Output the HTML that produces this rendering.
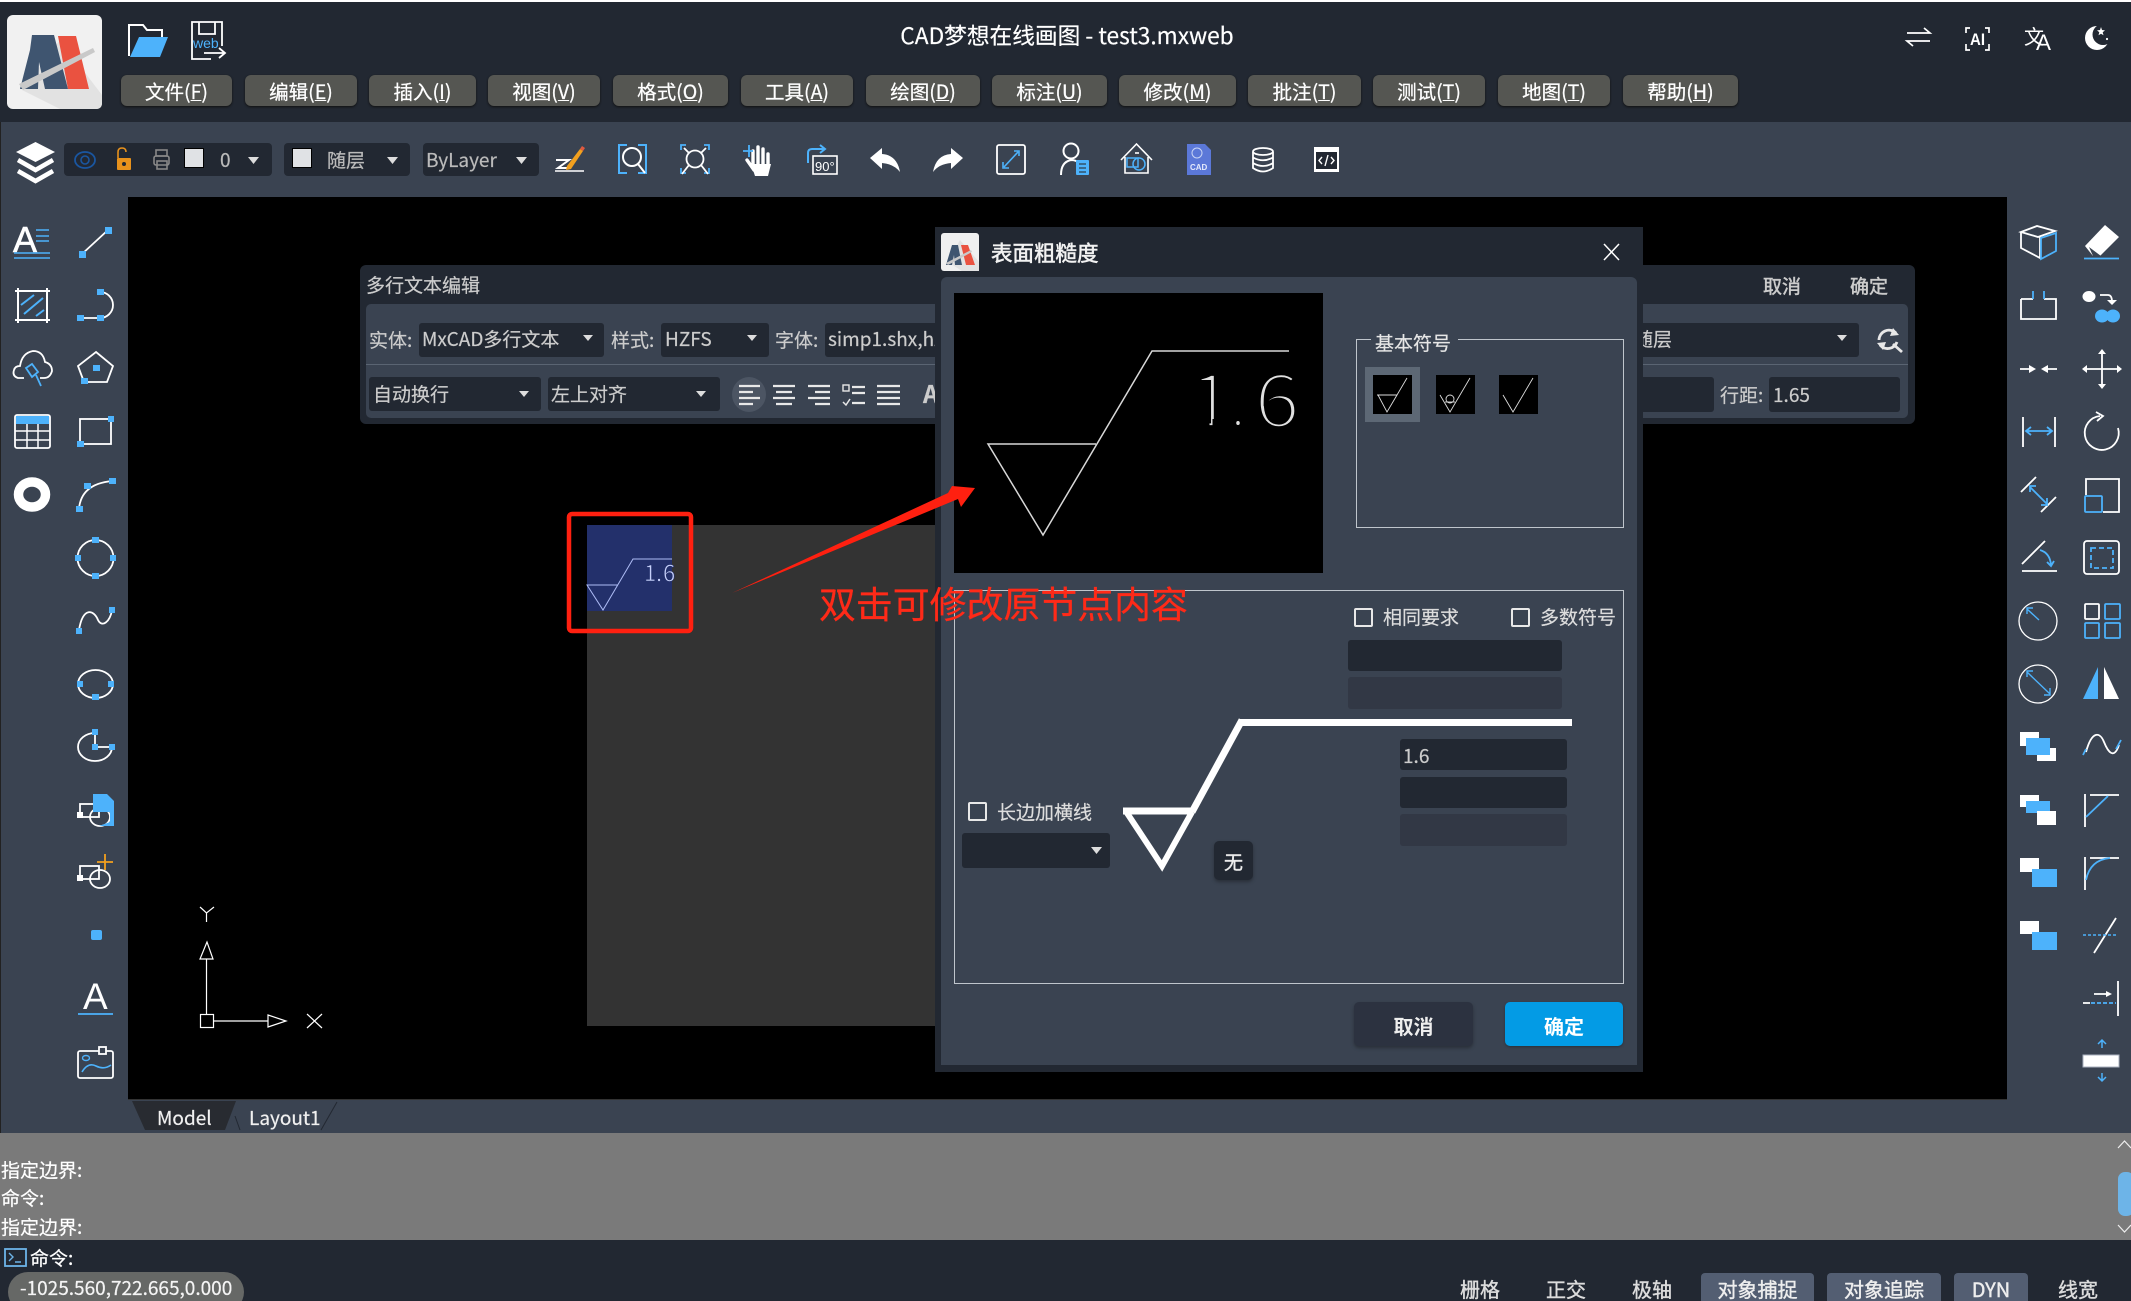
<!DOCTYPE html>
<html lang="zh"><head><meta charset="utf-8"><title>CAD梦想在线画图</title>
<style>
html,body{margin:0;padding:0;background:#000}
#p{position:relative;width:2131px;height:1301px;overflow:hidden;background:#3a4351;font-family:"Noto Sans CJK SC","Liberation Sans",sans-serif;color:#fff}
#p div{position:absolute;box-sizing:border-box}
.t{white-space:nowrap;font-size:19px;line-height:30px;height:30px;-webkit-text-stroke:.2px}
.l{color:#ccc}
.m{top:75px;height:31px;background:#555652;border-radius:6px;box-shadow:0 1px 2px #111;text-align:center;font-size:19.5px;line-height:31px;-webkit-text-stroke:.25px}
.d{background:#222832;border-radius:3px}
.e{background:#323845;border-radius:3px}
.s{background:#535e72;border-radius:4px 4px 0 0;top:1273px;height:28px;text-align:center;font-size:20px;line-height:32px;color:#eee;-webkit-text-stroke:.4px}
.sp{top:1274px;font-size:20px;line-height:30px;color:#ddd;white-space:nowrap;-webkit-text-stroke:.4px}
.c{border:2px solid #e8e8e8;border-radius:2px;width:19px;height:19px}
svg{position:absolute;left:0;top:0}
</style></head><body><div id="p">
<div style="left:0;top:0;width:2131px;height:2px;background:#fff"></div>
<div style="left:0;top:2px;width:2131px;height:120px;background:#222832"></div>
<div style="left:0;top:122px;width:1px;height:1118px;background:#222"></div>
<div style="left:128px;top:197px;width:1879px;height:903px;background:#000"></div>
<div style="left:587px;top:525px;width:360px;height:501px;background:#333"></div>
<div style="left:587px;top:525px;width:85px;height:86px;background:#23306b"></div>

<div class="t" style="left:0;top:20px;width:2134px;text-align:center;font-size:22.7px;line-height:30px">CAD梦想在线画图 - test3.mxweb</div>

<div class="m" style="left:121px;width:111px">文件(<u>F</u>)</div>
<div class="m" style="left:245px;width:112px">编辑(<u>E</u>)</div>
<div class="m" style="left:369px;width:107px">插入(<u>I</u>)</div>
<div class="m" style="left:488px;width:112px">视图(<u>V</u>)</div>
<div class="m" style="left:613px;width:115px">格式(<u>O</u>)</div>
<div class="m" style="left:741px;width:112px">工具(<u>A</u>)</div>
<div class="m" style="left:866px;width:114px">绘图(<u>D</u>)</div>
<div class="m" style="left:992px;width:115px">标注(<u>U</u>)</div>
<div class="m" style="left:1119px;width:117px">修改(<u>M</u>)</div>
<div class="m" style="left:1248px;width:113px">批注(<u>T</u>)</div>
<div class="m" style="left:1373px;width:112px">测试(<u>T</u>)</div>
<div class="m" style="left:1498px;width:112px">地图(<u>T</u>)</div>
<div class="m" style="left:1623px;width:115px">帮助(<u>H</u>)</div>

<div class="d" style="left:64px;top:143px;width:208px;height:33px;border-radius:4px"></div>
<div class="d" style="left:284px;top:143px;width:126px;height:33px;border-radius:4px"></div>
<div class="d" style="left:423px;top:143px;width:116px;height:33px;border-radius:4px"></div>
<div style="left:184px;top:148px;width:20px;height:20px;background:#e0e2e5;border:1px solid #000"></div>
<div style="left:292px;top:148px;width:20px;height:20px;background:#e0e2e5;border:1px solid #000"></div>
<div class="t" style="left:220px;top:145px;color:#bbb">0</div>
<div class="t" style="left:327px;top:145px;color:#bbb">随层</div>
<div class="t" style="left:426px;top:145px;color:#bbb">ByLayer</div>

<!-- text editor panel -->
<div style="left:360px;top:265px;width:1555px;height:159px;background:#222832;border-radius:6px"></div>
<div style="left:366px;top:304px;width:1542px;height:114px;background:#3a4351;border-radius:5px"></div>
<div style="left:366px;top:364px;width:1542px;height:1px;background:#5a6472"></div>
<div class="t l" style="left:366px;top:270px">多行文本编辑</div>
<div class="t l" style="left:1763px;top:271px;-webkit-text-stroke:.5px">取消</div>
<div class="t l" style="left:1850px;top:271px;-webkit-text-stroke:.5px">确定</div>
<div class="t l" style="left:369px;top:325px">实体:</div>
<div class="d" style="left:419px;top:323px;width:185px;height:34px"></div>
<div class="t l" style="left:422px;top:324px">MxCAD多行文本</div>
<div class="t l" style="left:611px;top:325px">样式:</div>
<div class="d" style="left:661px;top:323px;width:108px;height:34px"></div>
<div class="t l" style="left:665px;top:324px">HZFS</div>
<div class="t l" style="left:775px;top:325px">字体:</div>
<div class="d" style="left:825px;top:323px;width:1034px;height:34px"></div>
<div class="t l" style="left:828px;top:324px">simp1.shx,hzfs.shx</div>
<div class="t l" style="left:1634px;top:324px">随层</div>
<div class="d" style="left:369px;top:377px;width:172px;height:34px"></div>
<div class="t l" style="left:373px;top:379px">自动换行</div>
<div class="d" style="left:548px;top:377px;width:172px;height:34px"></div>
<div class="t l" style="left:551px;top:379px">左上对齐</div>
<div style="left:732px;top:377px;width:34px;height:35px;border-radius:50%;background:#4c5563"></div>
<div class="t l" style="left:923px;top:378px;font-size:24px;font-weight:700">A</div>
<div class="d" style="left:1600px;top:377px;width:114px;height:35px"></div>
<div class="t l" style="left:1720px;top:380px">行距:</div>
<div class="d" style="left:1769px;top:377px;width:131px;height:35px"></div>
<div class="t l" style="left:1773px;top:380px">1.65</div>

<!-- dialog -->
<div style="left:935px;top:227px;width:708px;height:845px;background:#222832"></div>
<div style="left:941px;top:277px;width:696px;height:788px;background:#3a4351;border-radius:6px 6px 0 0"></div>
<div style="left:941px;top:233px;width:38px;height:38px;background:#f0f0f0;border-radius:3px"></div>
<div class="t" style="left:991px;top:238px;font-size:21.5px;-webkit-text-stroke:.55px;color:#f2f2f2">表面粗糙度</div>
<div style="left:954px;top:293px;width:369px;height:280px;background:#000"></div>
<div style="left:1356px;top:339px;width:268px;height:189px;border:1px solid #bfc5cc"></div>
<div style="left:1371px;top:335px;width:87px;height:10px;background:#3a4351"></div>
<div class="t" style="left:1375px;top:328px;color:#e6e6e6">基本符号</div>
<div style="left:1365px;top:367px;width:55px;height:55px;background:#5d6875"></div>
<div style="left:1373px;top:375px;width:39px;height:39px;background:#000"></div>
<div style="left:1436px;top:375px;width:39px;height:39px;background:#000"></div>
<div style="left:1499px;top:375px;width:39px;height:39px;background:#000"></div>
<div style="left:954px;top:590px;width:670px;height:394px;border:1px solid #bfc5cc"></div>
<div class="c" style="left:1354px;top:608px"></div>
<div class="t" style="left:1383px;top:602px;color:#ddd">相同要求</div>
<div class="c" style="left:1511px;top:608px"></div>
<div class="t" style="left:1540px;top:602px;color:#ddd">多数符号</div>
<div class="d" style="left:1348px;top:640px;width:214px;height:31px"></div>
<div class="e" style="left:1348px;top:677px;width:214px;height:32px"></div>
<div class="d" style="left:1400px;top:739px;width:167px;height:31px"></div>
<div class="t" style="left:1403px;top:741px;color:#ccc">1.6</div>
<div class="d" style="left:1400px;top:777px;width:167px;height:31px"></div>
<div class="e" style="left:1400px;top:814px;width:167px;height:32px"></div>
<div class="c" style="left:968px;top:802px"></div>
<div class="t" style="left:997px;top:797px;color:#ddd">长边加横线</div>
<div class="d" style="left:962px;top:833px;width:148px;height:35px"></div>
<div class="d" style="left:1214px;top:841px;width:39px;height:39px;border-radius:5px;box-shadow:0 2px 3px #2a3039;text-align:center;font-size:19px;line-height:42px;color:#eee;-webkit-text-stroke:.4px">无</div>
<div style="left:1354px;top:1002px;width:119px;height:44px;background:#2c3240;border-radius:5px;box-shadow:0 2px 3px #2a3039;text-align:center;font-size:20px;line-height:47px;font-weight:700;color:#eee">取消</div>
<div style="left:1505px;top:1002px;width:118px;height:44px;background:#039be5;border-radius:5px;box-shadow:0 1px 2px #2a3039;text-align:center;font-size:20px;line-height:47px;font-weight:700;color:#fff">确定</div>

<!-- bottom -->
<div style="left:128px;top:1099px;width:1879px;height:1px;background:#333"></div>
<svg width="400" height="1140" viewBox="0 0 400 1140" xmlns="http://www.w3.org/2000/svg">
<path d="M132 1101 H236 L225 1130 H145Z" fill="#282b31"/>
<path d="M235 1116 L240 1130 M321 1130 L337 1102" fill="none" stroke="#222832"/>
</svg>
<div class="t" style="left:157px;top:1103px;color:#f0f0f0">Model</div>
<div class="t" style="left:249px;top:1103px;color:#f0f0f0">Layout1</div>
<div style="left:0;top:1133px;width:2131px;height:107px;background:#7a7a7a"></div>
<div style="left:0;top:1240px;width:2131px;height:61px;background:#222832"></div>
<div class="t" style="left:1px;top:1155px">指定边界:</div>
<div class="t" style="left:1px;top:1183px">命令:</div>
<div class="t" style="left:1px;top:1212px">指定边界:</div>
<div class="t" style="left:30px;top:1243px">命令:</div>
<div style="left:8px;top:1272px;width:236px;height:40px;border-radius:20px;background:#666866"></div>
<div class="t" style="left:20px;top:1273px;font-size:19px;color:#f5f5f5">-1025.560,722.665,0.000</div>
<div style="left:2118px;top:1172px;width:16px;height:44px;border-radius:7px;background:#6db4e8"></div>
<div class="sp" style="left:1460px">栅格</div>
<div class="sp" style="left:1546px">正交</div>
<div class="sp" style="left:1632px">极轴</div>
<div class="s" style="left:1701px;width:113px">对象捕捉</div>
<div class="s" style="left:1827px;width:114px">对象追踪</div>
<div class="s" style="left:1954px;width:74px">DYN</div>
<div class="sp" style="left:2058px">线宽</div>

<svg width="2131" height="1301" viewBox="0 0 2131 1301" xmlns="http://www.w3.org/2000/svg" font-family="Liberation Sans, sans-serif">
<!-- logo -->
<rect x="7" y="15" width="95" height="94" rx="6" fill="#f1f1f1"/>
<path d="M60 40 L102 95 V103 Q102 109 96 109 H60 L22 90Z" fill="#e2e2e2"/>
<path d="M32 35 H54 L68 89 H45 L39 62 L38 89 H20 L30 50Z" fill="#3f5570"/>
<path d="M58 36 H76 L89 89 H68Z" fill="#ea5240"/>
<path d="M19 84 L93 48 L95 52 L23 90Z" fill="#c9c9c9"/>
<!-- folder / save -->
<path d="M129 56 V25 H143 L147 30 H162 V37" fill="none" stroke="#fff" stroke-width="2"/>
<path d="M139 37 H168 L160 57 H130Z" fill="#4db2fb"/>
<g fill="none" stroke="#fff" stroke-width="1.8"><path d="M222 46 V22 H192 V59 H211"/><path d="M199 22 V34 H215 V22"/><path d="M204 53 H225 M219 48 L225 53 L219 58"/></g>
<text x="193" y="48" font-size="14" fill="#4db2fb">web</text>
<!-- top right -->
<g fill="none" stroke="#fff" stroke-width="1.7"><path d="M1907 33 H1930 L1924 28 M1930 41 H1907 L1913 46"/><path d="M1970 28 H1966 V33 M1966 44 V50 H1970 M1985 28 H1989 V33 M1989 44 V50 H1985"/></g>
<text x="1970" y="45" font-size="17" fill="#fff" font-weight="700" textLength="15" lengthAdjust="spacingAndGlyphs">AI</text>
<text x="2024" y="44" font-size="20" fill="#fff" font-family="Noto Sans CJK SC,sans-serif">文</text>
<text x="2036" y="50" font-size="22" fill="#fff" textLength="15" lengthAdjust="spacingAndGlyphs">A</text>
<circle cx="2097" cy="38" r="12" fill="#fff"/><circle cx="2103" cy="34.500" r="10.500" fill="#222832"/>
<path d="M2101 27 l1 3 3 .4 -2.300 1.900 .8 3 -2.500 -1.500 -2.500 1.500 .8 -3 -2.300 -1.900 3 -.4Z" fill="#fff"/><circle cx="2107" cy="39" r="1.100" fill="#fff"/>
<!-- layers -->
<path d="M35.500 142 L55 152 L35.500 162 L16 152Z" fill="#fff"/>
<path d="M18 160 L35.500 170 L53 160 M18 171 L35.500 181 L53 171" fill="none" stroke="#fff" stroke-width="4.500"/>
<!-- layer select -->
<ellipse cx="85" cy="160" rx="10" ry="8" fill="none" stroke="#1a56a0" stroke-width="1.8"/><circle cx="85" cy="160" r="4" fill="none" stroke="#1a56a0" stroke-width="1.6"/>
<path d="M118 158 V152 Q118 148 122 148 Q126 148 126 152" fill="none" stroke="#e8921c" stroke-width="1.600"/><rect x="117" y="158" width="14" height="12" rx="1" fill="#e8921c"/><circle cx="124" cy="164" r="2" fill="#222832"/>
<g fill="none" stroke="#888" stroke-width="1.6"><rect x="156" y="150" width="11" height="6"/><rect x="154" y="156" width="15" height="9" rx="2"/><rect x="157" y="161" width="10" height="8"/></g>
<g fill="#ddd"><path d="M248 157 H259 L253.5 164Z"/><path d="M387 157 H398 L392.500 164Z"/><path d="M516 157 H527 L521.500 164Z"/></g>
<!-- toolbar -->
<path d="M556 160 H569 L558 168 H569" fill="none" stroke="#fff" stroke-width="2"/><path d="M555 171 H584" stroke="#fff" stroke-width="1.400"/>
<path d="M567 166 L580 149 L583 151 L571 169 L566 170Z" fill="#f2a01e"/><path d="M580 149 L582 146 L585 148 L583 151Z" fill="#e05a40"/>
<path d="M627 145 H619 V173 H627 M638 145 H646 V173 H638" fill="none" stroke="#4db2fb" stroke-width="2"/>
<g fill="none" stroke="#fff" stroke-width="2"><circle cx="632" cy="157" r="9"/><path d="M638 164 L645 173"/></g>
<path d="M681 150 V145 H686 M709 150 V145 H704 M681 168 V173 H686 M709 168 V173 H704" fill="none" stroke="#4db2fb" stroke-width="1.800"/>
<g fill="none" stroke="#fff" stroke-width="1.800"><circle cx="695" cy="159" r="8.500"/><path d="M701 165 L708 174 M689 165 L682 174 M689 153 L684 148 M701 153 L706 148"/></g>
<path d="M751 164 H771 L768 176 H755Z" fill="#fff"/>
<path d="M753 165 V151 M758 164 V147 M763 164 V149 M768 165 V154 M754 170 L747 160" fill="none" stroke="#fff" stroke-width="3.400" stroke-linecap="round"/>
<path d="M743 151 H753 M749 145 V157" stroke="#4db2fb" stroke-width="1.800"/>
<rect x="813" y="156" width="24" height="18" fill="none" stroke="#fff" stroke-width="1.6"/>
<text x="815" y="171" font-size="13" fill="#fff">90°</text>
<path d="M808 163 V153 Q808 149 812 149 H824 M820 145 L825 149 L820 153" fill="none" stroke="#4db2fb" stroke-width="2"/>
<path d="M870 158 L882 148 V154 Q897 155 900 172 Q894 164 882 163 V169Z" fill="#fff"/>
<path d="M963 158 L951 148 V154 Q936 155 933 172 Q939 164 951 163 V169Z" fill="#fff"/>
<rect x="997" y="145" width="28" height="29" rx="2" fill="none" stroke="#fff" stroke-width="1.800"/>
<path d="M1004 167 L1018 152 M1014 151 H1019 V156 M1003 162 V168 H1009" fill="none" stroke="#4db2fb" stroke-width="1.600"/>
<g fill="none" stroke="#fff" stroke-width="2"><circle cx="1071" cy="151" r="7.500"/><path d="M1061 175 Q1061 162 1071 160 Q1076 160 1079 163"/></g>
<rect x="1076" y="160" width="13" height="15" rx="1" fill="#4db2fb"/><path d="M1079 164 H1086 M1079 168 H1086 M1079 172 H1086" stroke="#222" stroke-width="1"/>
<g fill="none" stroke="#fff" stroke-width="1.6"><path d="M1121 160 L1136.500 144 L1152 160"/><path d="M1125 157 V173 H1148 V157"/><path d="M1135 153 H1139"/></g>
<g fill="none" stroke="#4db2fb" stroke-width="1.500"><rect x="1127" y="158" width="11" height="9"/><circle cx="1139" cy="164" r="6"/></g>
<path d="M1187 144 H1205 L1211 150 V175 H1187Z" fill="#5b78d8"/><circle cx="1197" cy="153" r="5" fill="none" stroke="#c8d4f5"/>
<text x="1190" y="170" font-size="8" fill="#e4eafc" font-weight="700">CAD</text>
<g fill="none" stroke="#fff" stroke-width="1.800"><ellipse cx="1263" cy="151.500" rx="10" ry="3.500"/><path d="M1253 152 V168 Q1263 175 1273 168 V152 M1253 157.500 Q1263 163 1273 157.500 M1253 163 Q1263 169 1273 163"/></g>
<rect x="1314" y="147" width="25" height="25" fill="#fff"/><rect x="1316" y="152" width="21" height="17" fill="#222832"/>
<path d="M1322 157 L1319 160.500 L1322 164 M1331 157 L1334 160.500 L1331 164 M1328 155 L1325 166" fill="none" stroke="#fff" stroke-width="1.400"/>

<!-- left toolbar col1 -->
<text x="13" y="252" font-size="36" fill="#fff" stroke="#fff" stroke-width=".6">A</text>
<path d="M36 230 H49 M36 236 H49 M36 241 H49 M14 253 H50 M14 258 H50" stroke="#4db2fb" stroke-width="1.500"/>
<rect x="18" y="291" width="29" height="29" fill="none" stroke="#fff" stroke-width="2"/>
<path d="M15 291 H21 M44 291 H50 M15 320 H21 M44 320 H50 M18 288 V294 M47 288 V294 M18 317 V323 M47 317 V323" stroke="#fff" stroke-width="2"/>
<path d="M21 305 L34 295 M24 314 L43 298 M36 316 L44 310" stroke="#4db2fb" stroke-width="2"/>
<path d="M24 378 H18 Q12 376 14 370 Q15 366 20 366 Q22 353 33 351 Q43 351 45 362 Q52 364 52 371 Q50 378 44 378 H40" fill="none" stroke="#fff" stroke-width="1.800"/>
<path d="M26 368 L32 364 L38 372 L32 377Z M36 375 L41 386" fill="none" stroke="#4db2fb" stroke-width="1.800"/>
<rect x="15" y="415" width="35" height="33" rx="2" fill="none" stroke="#fff" stroke-width="1.800"/><rect x="16" y="416" width="33" height="8" fill="#4db2fb"/>
<path d="M15 431 H50 M15 440 H50 M27 424 V448 M38 424 V448" stroke="#fff" stroke-width="1.500"/>
<ellipse cx="32" cy="494.500" rx="13.500" ry="12.500" fill="none" stroke="#fff" stroke-width="9.500"/>
<!-- left toolbar col2 -->
<g fill="none" stroke="#fff" stroke-width="1.800">
<path d="M82 254 L108 230"/>
<path d="M80 318 H100 A13 13 0 0 0 100 292"/>
<path d="M96 352 L113 366 L107 382 H84 L78 366Z"/>
<rect x="80" y="419" width="31" height="25"/>
<path d="M79 509 Q81 484 112 481"/>
<circle cx="95.500" cy="558" r="18"/>
<path d="M79 630 C83 606 94 610 98 620 C102 628 110 622 112 610"/>
<ellipse cx="95.500" cy="684" rx="17.500" ry="14"/>
<path d="M112 747 A17 14 0 1 1 95 733 V747 H112"/>
<rect x="80" y="804" width="19" height="13"/><ellipse cx="100" cy="817" rx="10" ry="9"/>
<rect x="80" y="866" width="19" height="13"/><ellipse cx="100" cy="879" rx="10" ry="9"/>
<rect x="78" y="1051" width="35" height="27" rx="2"/><rect x="99" y="1047" width="7" height="7" fill="#3a4351"/>
</g>
<rect x="77" y="812" width="6" height="6" fill="#fff"/><rect x="77" y="875" width="6" height="6" fill="#fff"/>
<path d="M93 794 H107 L114 801 V826 H99 L110 822 V812 H93Z" fill="#4db2fb"/>
<path d="M105 854 V870 M97 862 H113" stroke="#f2a01e" stroke-width="1.800"/>
<g fill="#4db2fb">
<rect x="79" y="251" width="7" height="7"/><rect x="105" y="227" width="7" height="7"/>
<rect x="77" y="315" width="7" height="6"/><rect x="97" y="315" width="7" height="6"/><rect x="97" y="289" width="7" height="6"/>
<rect x="81" y="378" width="7" height="6"/><rect x="93" y="365" width="7" height="6"/>
<rect x="108" y="416" width="6" height="6"/><rect x="77" y="441" width="7" height="6"/>
<rect x="76" y="506" width="7" height="6"/><rect x="84" y="483" width="7" height="6"/><rect x="109" y="478" width="7" height="6"/>
<rect x="92" y="537" width="7" height="6"/><rect x="92" y="573" width="7" height="6"/><rect x="75" y="555" width="6" height="6"/><rect x="110" y="555" width="6" height="6"/>
<rect x="76" y="628" width="6" height="6"/><rect x="109" y="607" width="6" height="6"/>
<rect x="77" y="681" width="6" height="6"/><rect x="108" y="681" width="6" height="6"/><rect x="92" y="694" width="7" height="6"/>
<rect x="92" y="729" width="6" height="6"/><rect x="92" y="744" width="6" height="6"/><rect x="109" y="744" width="6" height="6"/>
<rect x="91" y="930" width="11" height="10" rx="2"/>
</g>
<text x="83" y="1009" font-size="37" fill="#fff">A</text>
<path d="M78 1014 H113" stroke="#4db2fb" stroke-width="1.800"/>
<ellipse cx="86" cy="1058" rx="3.500" ry="2.500" fill="none" stroke="#4db2fb" stroke-width="1.400"/>
<path d="M82 1072 Q88 1062 96 1066 Q104 1070 111 1065" fill="none" stroke="#4db2fb" stroke-width="1.600"/>

<!-- right toolbar -->
<g fill="none" stroke="#fff" stroke-width="1.800">
<path d="M2021 232 L2037 226 L2055 231 L2038 237Z M2021 232 V248 L2040 258 V237"/>
<path d="M2021 299 H2033 M2044 299 H2056 V319 H2021 V299"/>
<path d="M2100 295 H2108 Q2112 295 2112 302"/>
<path d="M2020 369 H2034 M2057 369 H2043"/>
<path d="M2102 351 V387 M2084 369 H2120"/>
<path d="M2023 417 V447 M2055 417 V447"/>
<path d="M2100 416 A17 17 0 1 0 2118 428 M2096 412 L2103 416 L2097 421"/>
<path d="M2021 492 L2036 477 M2041 512 L2056 497"/>
<path d="M2103 512 H2119 V479 H2086 V495"/>
<rect x="2084" y="541" width="35" height="33" rx="3"/>
<path d="M2022 564 L2045 541 M2022 571 H2057"/>
<ellipse cx="2038" cy="621" rx="19" ry="19" stroke-width="1.300"/>
<rect x="2085" y="604" width="14" height="15" rx="1"/>
<ellipse cx="2038" cy="684" rx="19" ry="19" stroke-width="1.300"/>
<path d="M2086 752 C2092 730 2100 732 2104 742 S2114 760 2119 745"/>
<path d="M2085 794 V827 M2090 795 H2119"/><path d="M2085 857 V890 M2090 858 H2119"/>
<path d="M2094 953 L2116 918"/>
<path d="M2094 994 H2110 M2118 981 V1016 M2083 1003 H2090"/>
</g>
<g fill="#fff">
<path d="M2036 369 l-7 -4 v8Z M2041 369 l7 -4 v8Z"/>
<path d="M2102 349 l-4 5 h8Z M2102 389 l-4 -5 h8Z M2082 369 l5 -4 v8Z M2122 369 l-5 -4 v8Z"/>
<path d="M2085 246 L2105 225 L2119 237 L2100 256 H2093Z"/>
<ellipse cx="2089" cy="296.500" rx="6.500" ry="5.500"/>
<path d="M2107 300 h10 l-5 5Z"/>
<path d="M2104 667 L2119 699 H2104Z"/>
<rect x="2020" y="732" width="19" height="14"/><rect x="2037" y="748" width="19" height="13"/>
<rect x="2020" y="795" width="19" height="12"/><rect x="2037" y="811" width="19" height="14"/>
<rect x="2020" y="858" width="19" height="14"/><rect x="2020" y="921" width="19" height="13"/>
<path d="M2112 994 l-6 -3 v6Z"/>
<rect x="2083" y="1055" width="36" height="12" stroke="#a9b2bf"/>
</g>
<path d="M2089 247 L2101 256 H2093Z" fill="#3a4351"/>
<g fill="#4db2fb">
<path d="M2098 667 V699 H2083Z"/>
<ellipse cx="2102" cy="316" rx="7" ry="6.500"/><ellipse cx="2113" cy="316" rx="7" ry="6.500"/>
<rect x="2026" y="738" width="24" height="17"/>
<rect x="2026" y="801" width="24" height="12"/>
<rect x="2032" y="869" width="25" height="18"/><rect x="2032" y="932" width="25" height="18"/>
</g>
<rect x="2037" y="811" width="19" height="14" fill="#fff"/>
<rect x="2020" y="795" width="19" height="6" fill="#fff"/>
<g fill="none" stroke="#4db2fb" stroke-width="1.800">
<path d="M2041 238 L2056 233 V251 L2041 259Z"/>
<path d="M2084 258.500 H2119"/>
<path d="M2033 291 V299 M2044 291 V299"/>
<path d="M2027 431 H2051 M2031 427 L2026 431 L2031 435 M2047 427 L2052 431 L2047 435"/>
<path d="M2030 487 L2047 504 M2030 492 V486 H2036 M2047 498 V505 H2041"/>
<rect x="2085" y="496" width="17" height="16" rx="1"/>
<rect x="2091" y="548" width="22" height="20" stroke-dasharray="5 3"/>
<path d="M2040 550 Q2050 553 2051 565 M2047 562 L2051 566 L2054 561"/>
<path d="M2027 609 L2039 620 M2027 614 V608 H2033" stroke-width="1.400"/>
<rect x="2105" y="604" width="15" height="15" rx="1"/><rect x="2085" y="623" width="14" height="15" rx="1"/><rect x="2105" y="623" width="15" height="15" rx="1"/>
<path d="M2027 672 L2050 694 M2027 677 V671 H2033 M2050 688 V695 H2044" stroke-width="1.400"/>
<path d="M2083 755 L2086 749 M2116 749 L2121 740"/>
<path d="M2086 817 L2108 796"/>
<path d="M2086 880 Q2090 860 2110 858"/>
<path d="M2083 935 H2118" stroke-dasharray="3 2" stroke-width="1.500"/>
<path d="M2091 1003 H2116" stroke-dasharray="4 2"/>
<path d="M2102 1040 V1048 M2098 1044 L2102 1040 L2106 1044 M2102 1073 V1081 M2098 1077 L2102 1081 L2106 1077" stroke-width="1.500"/>
</g>

<!-- panel arrows -->
<g fill="#ddd"><path d="M583 335 H593 L588 341Z"/><path d="M747 335 H757 L752 341Z"/><path d="M519 391 H529 L524 397Z"/><path d="M696 391 H706 L701 397Z"/><path d="M1837 335 H1847 L1842 341Z"/></g>
<g stroke="#e8e8e8" stroke-width="2.200">
<path d="M739 386 H760 M739 392 H753 M739 398 H760 M739 404 H753"/>
<path d="M773 386 H795 M776 392 H792 M773 398 H795 M776 404 H792"/>
<path d="M808 386 H830 M815 392 H830 M808 398 H830 M815 404 H830"/>
<path d="M852 387 H865 M852 393 H865 M852 403 H865" />
<path d="M877 386 H900 M877 392 H900 M877 398 H900 M877 404 H900"/>
</g>
<rect x="843" y="385" width="6" height="6" fill="none" stroke="#e8e8e8" stroke-width="1.400"/><path d="M843 402 L846 405 L850 399" fill="none" stroke="#e8e8e8" stroke-width="1.500"/>
<g fill="none" stroke="#e8e8e8" stroke-width="2.800"><path d="M1879 340 A10 10 0 0 1 1896 333 M1897 342 A10 10 0 0 1 1880 345"/><path d="M1893 344 L1902 352"/></g>
<path d="M1893 328 L1899 335 L1890 336Z M1883 350 L1877 343 L1886 342Z" fill="#e8e8e8"/>

<!-- canvas drawing -->
<g fill="none" stroke="#fff" stroke-width="1.200"><path d="M200 907 L206.500 913 L214 907 M206.500 913 V922"/>
<path d="M207 942 L200 959 H213Z M206.500 959 V1014"/><rect x="200.500" y="1014.500" width="13" height="13"/>
<path d="M214 1021 H268 M268 1015 V1027 L286 1021Z M307 1014 L322 1028 M322 1014 L307 1028"/></g>
<g fill="none" stroke="#aebcf5" stroke-width="1"><path d="M672 559 H633 L603 610 L587 585 H618"/></g>
<text x="644 656 663" y="581" font-size="22" fill="#c6d0fa" stroke="#23306b" stroke-width=".6" style="paint-order:fill stroke" font-family="Noto Sans CJK SC,sans-serif">1.6</text>
<!-- dialog logo, close -->
<path d="M960 240 L979 262 V271 H962 L948 262Z" fill="#e2e2e2"/>
<path d="M952 245 H958 L962 265 H955 L954 255 L952 265 H946Z" fill="#3f5570"/><path d="M961 245 H968 L975 265 H966Z" fill="#ea5240"/><path d="M946 263 L971 250 L972 252 L948 265Z" fill="#c9c9c9"/>
<path d="M1604 244 L1619 260 M1619 244 L1604 260" stroke="#fff" stroke-width="1.500"/>
<!-- preview -->
<g fill="none" stroke="#d8d8d8" stroke-width="1.300"><path d="M1289 351 H1152 L1043 535 L988 444 H1096" stroke-width="1.500"/></g>
<g font-size="72" fill="#e0e0e0" stroke="#000" stroke-width="3.800" style="paint-order:fill stroke" font-family="Noto Sans CJK SC,sans-serif">
<text x="1191" y="427">1</text>
<text x="1228" y="427" stroke-width="6">.</text>
<text transform="translate(1254,427) scale(1.150,1)" x="0" y="0" stroke-width="3.600">6</text>
</g>
<path d="M1193 419 H1209.500 V430 H1193Z M1212.500 419 H1228 V430 H1212.500Z" fill="#000"/>
<!-- thumbs -->
<g fill="none" stroke="#ddd" stroke-width=".9">
<path d="M1377 395 H1397 M1378 395 L1387 412 L1407 378"/>
<path d="M1440 395 L1450 412 L1470 378"/><circle cx="1450" cy="399" r="4"/><path d="M1445 402 H1455"/>
<path d="M1503 395 L1513 412 L1533 378"/>
</g>
<!-- big symbol -->
<g fill="none" stroke="#fff"><path d="M1572 722.500 H1240" stroke-width="7"/><path d="M1242 720 L1192 812" stroke-width="7"/><path d="M1193 811 H1123" stroke-width="7"/><path d="M1127 813 L1162 866 L1192 812" stroke-width="6"/></g>
<path d="M1091 847 H1102 L1096.500 854Z" fill="#ddd"/>
<!-- command icon, scroll chevrons -->
<rect x="5" y="1249" width="21" height="17" fill="none" stroke="#6db4e8" stroke-width="1.800"/><path d="M9 1253 L13 1257 L9 1261 M15 1262 H21" fill="none" stroke="#6db4e8" stroke-width="1.400"/>
<path d="M2118 1148 L2124.500 1141 L2131 1148 M2118 1225 L2124.500 1232 L2131 1225" fill="none" stroke="#eee" stroke-width="1.200"/>
<!-- annotation -->
<rect x="569" y="514" width="122" height="117" rx="3" fill="none" stroke="#ff2010" stroke-width="4.500"/>
<path d="M732 593 L948 493 L952 486 L975 488 L961 507 L958 499Z" fill="#ff2010"/>
<text x="819" y="618" font-size="36.900" fill="#ff2a18" font-family="Noto Sans CJK SC,sans-serif" stroke="#ff2a18" stroke-width=".3">双击可修改原节点内容</text>
</svg>
</div></body></html>
